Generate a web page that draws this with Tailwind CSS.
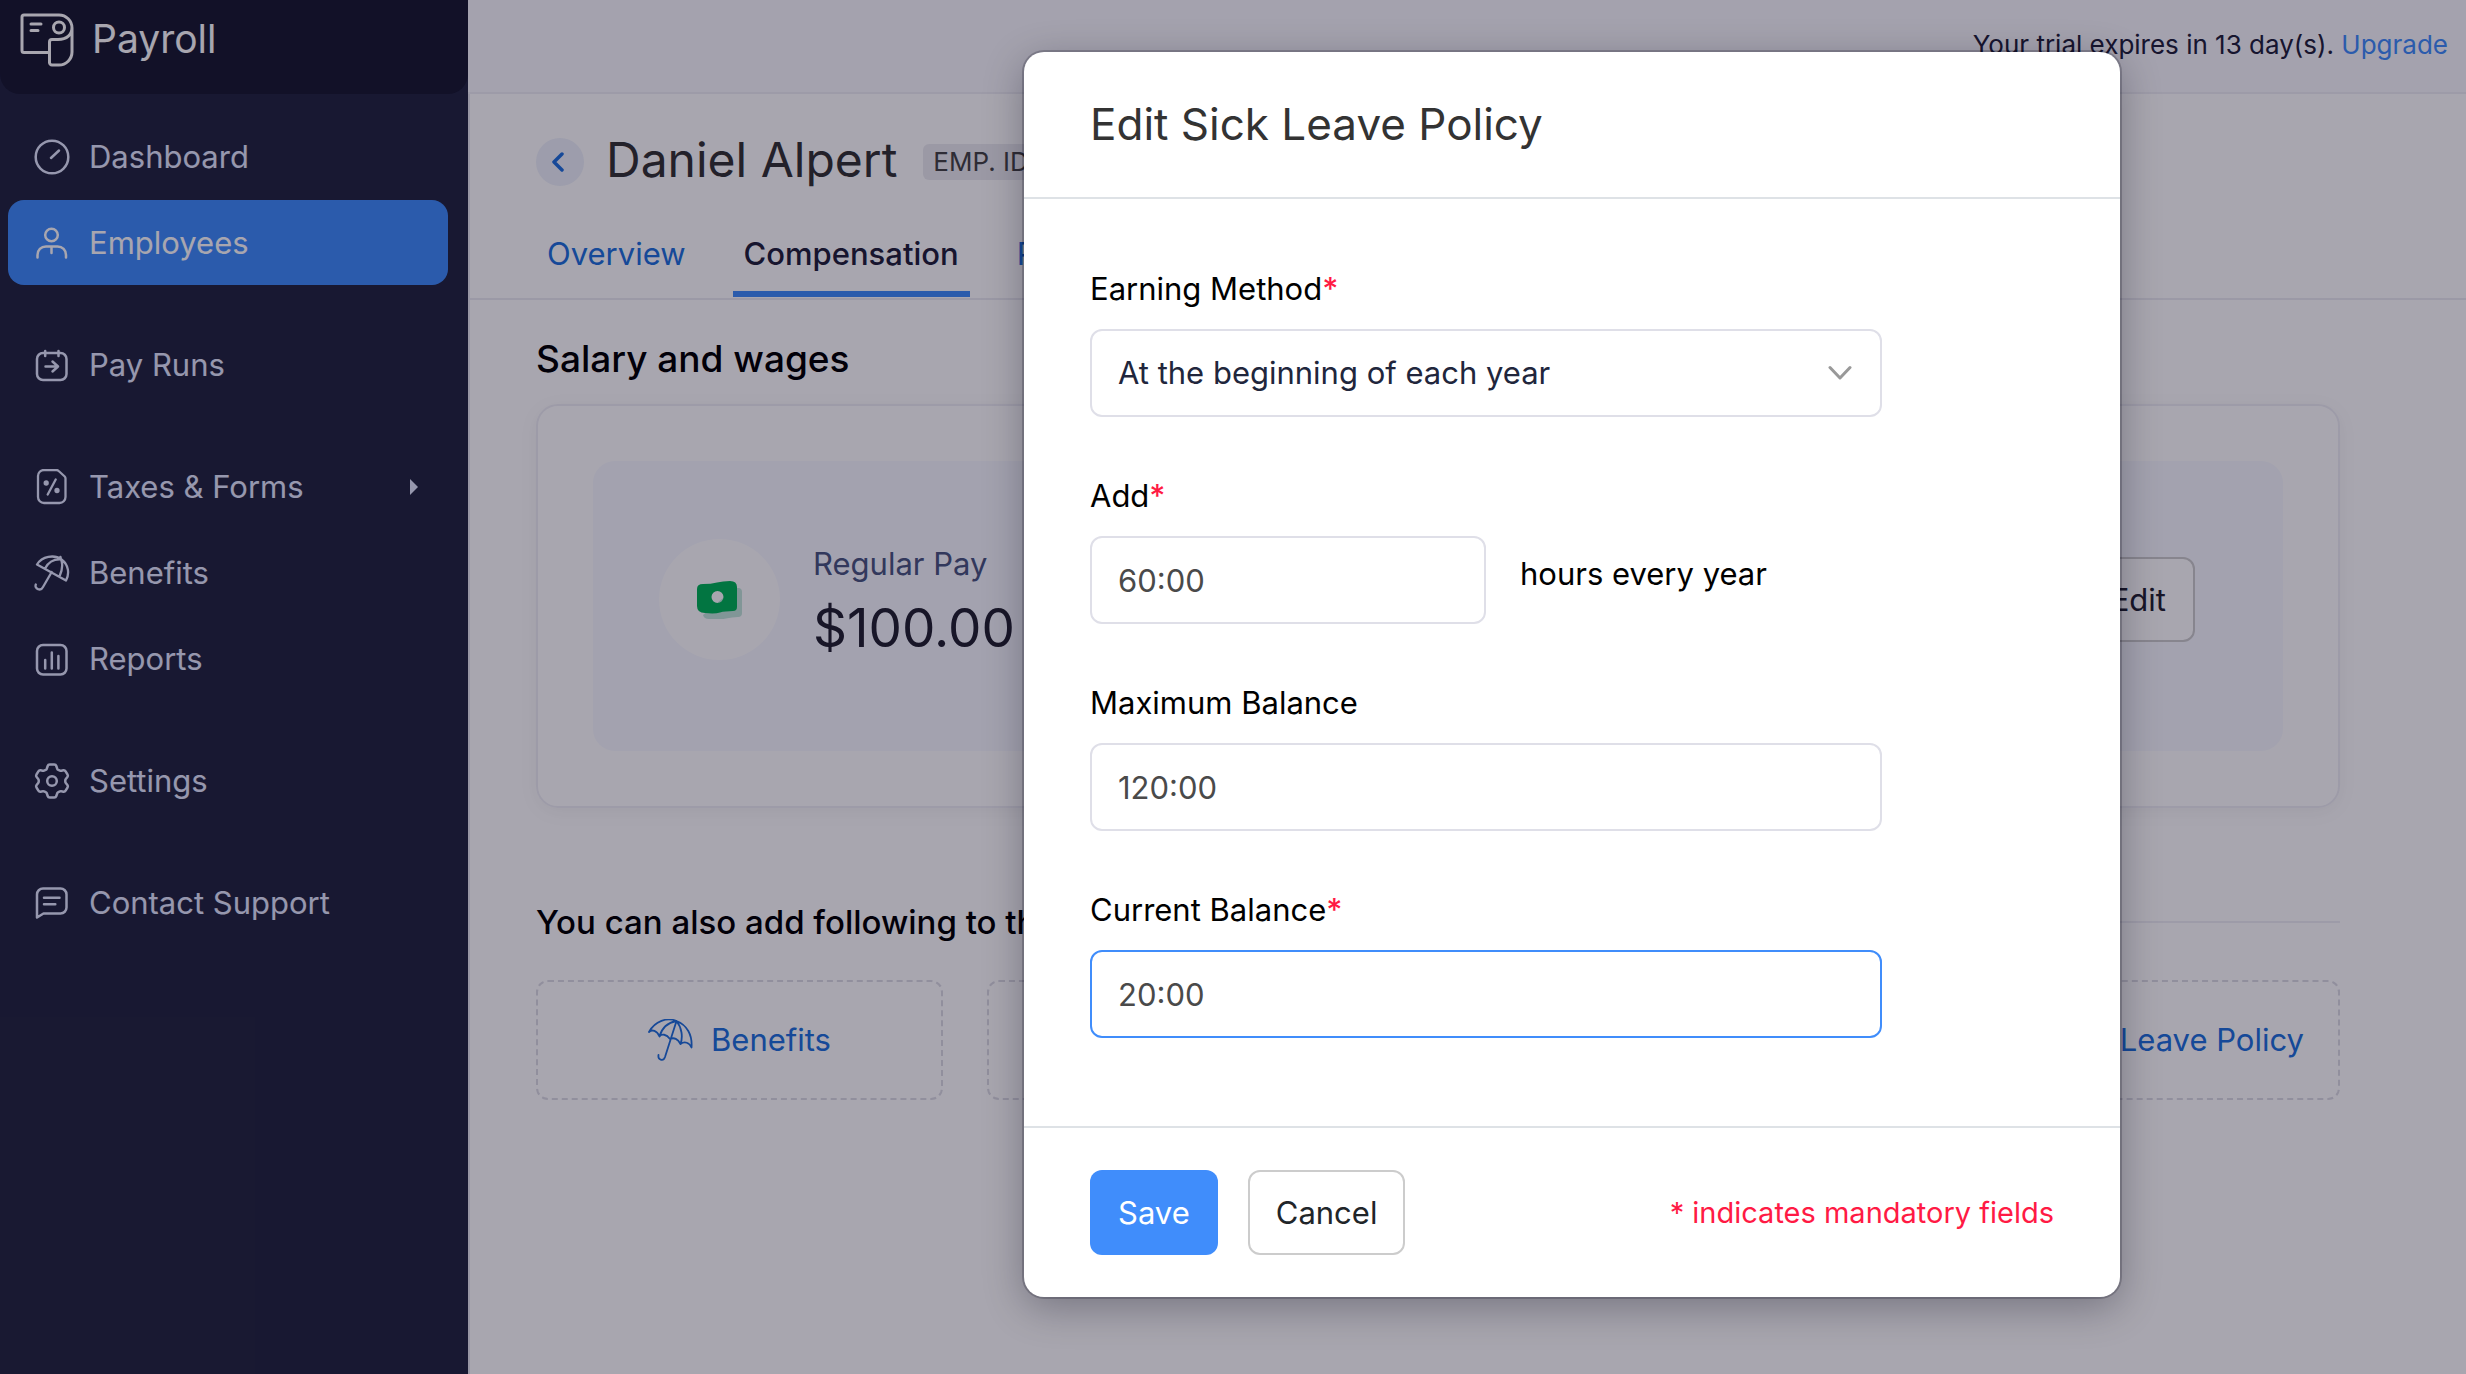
<!DOCTYPE html>
<html lang="en">
<head>
  <meta charset="UTF-8" />
  <meta name="viewport" content="width=device-width,initial-scale=1" />
  <title>Payroll – Daniel Alpert</title>
  <script src="https://cdn.jsdelivr.net/npm/@tailwindcss/browser@4"></script>
</head>

<body class="relative min-h-screen flex bg-white font-['Inter',sans-serif] text-[31px] leading-9 text-black overflow-x-hidden">

<!-- Sidebar -->
<aside class="w-[468px] shrink-0 bg-[#232640] text-[#e3e9fd]">
  <div class="h-[94px] flex items-start gap-[18px] pl-5 pt-[13px] rounded-b-[20px] bg-[#191b31] text-white">
    <svg class="w-[54px] h-[54px]" viewBox="0 0 54 54" fill="none" stroke="currentColor" stroke-width="3" stroke-linecap="round" stroke-linejoin="round">
      <path d="M29 39.500H4a2 2 0 0 1-2-2V4a2 2 0 0 1 2-2h35a13 13 0 0 1 13 13v24a13 13 0 0 1-13 13h-7a2.500 2.500 0 0 1-2.500-2.500V29a2.500 2.500 0 0 1 2.500-2.500h6c9 0 14-5 14-12"/>
      <circle cx="39" cy="14.500" r="5.500"/>
      <path d="M11 11h10M11 17.500h7"/>
    </svg>
    <span class="pt-2 text-[39px]">Payroll</span>
  </div>

  <nav class="pt-5 pl-2 pr-5 flex flex-col gap-[37px]">
    <div class="flex flex-col gap-px">
      <a href="#" class="h-[85px] flex items-center gap-[19px] px-[26px] rounded-2xl">
        <svg class="size-9" viewBox="0 0 36 36" fill="none" stroke="currentColor" stroke-width="2.500" stroke-linecap="round"><circle cx="18" cy="18" r="16.300"/><path d="M17 19l8-7.500"/></svg>
        Dashboard
      </a>
      <a href="#" class="h-[85px] flex items-center gap-[19px] px-[26px] rounded-2xl bg-[#408dfb] text-white">
        <svg class="size-9" viewBox="0 0 36 36" fill="none" stroke="currentColor" stroke-width="2.500" stroke-linecap="round"><circle cx="17.500" cy="10" r="6.300"/><path d="M3.500 32.500v-2.500c0-5 3.500-8.500 8.500-8.500h11.500c5 0 8.500 3.500 8.500 8.500v2.500M17.500 22v6"/></svg>
        Employees
      </a>
    </div>

    <a href="#" class="h-[85px] flex items-center gap-[19px] px-[26px] rounded-2xl">
      <svg class="size-9" viewBox="0 0 36 36" fill="none" stroke="currentColor" stroke-width="2.500" stroke-linecap="round" stroke-linejoin="round"><rect x="3" y="6" width="29.500" height="27" rx="6"/><path d="M11.200 4v5M24.500 4v5M11.500 19.500H24M18.500 14.500l5.500 5-5.500 5"/></svg>
      Pay Runs
    </a>

    <div class="flex flex-col gap-px">
      <a href="#" class="h-[85px] flex items-center gap-[19px] px-[26px] rounded-2xl">
        <svg class="size-9" viewBox="0 0 36 36" fill="none" stroke="currentColor" stroke-width="2.300" stroke-linecap="round" stroke-linejoin="round"><path d="M10 1h12.500c1 0 1.500.3 2.200 1l6 5.500c.6.600.8 1 .8 2V28a6 6 0 0 1-6 6H10a6 6 0 0 1-6-6V7a6 6 0 0 1 6-6zM13.700 25.500l8-15"/><circle cx="12.200" cy="14" r="1.500" fill="currentColor"/><circle cx="23" cy="21.500" r="1.500" fill="currentColor"/></svg>
        Taxes &amp; Forms
        <svg class="ml-auto mr-1 w-2 h-4" viewBox="0 0 8 16" fill="currentColor"><path d="M0 0l8 8-8 8z"/></svg>
      </a>
      <a href="#" class="h-[85px] flex items-center gap-[19px] px-[26px] rounded-2xl">
        <svg class="size-9" viewBox="0 0 36 36" fill="none" stroke="currentColor" stroke-width="2.300" stroke-linecap="round" stroke-linejoin="round"><path d="M3 9.500C8 1.500 20-1 27.500 4.500 35 10 35.500 19 32 25.500zM11 13.500C14.500 7 20 4 27 4.500M26.500 2l.5 2.500c2 4 1 11-1.500 17M17.700 17L9 32c-1 2-3 3-5 2.200-2-.7-3-2.700-2.200-4.700"/></svg>
        Benefits
      </a>
      <a href="#" class="h-[85px] flex items-center gap-[19px] px-[26px] rounded-2xl">
        <svg class="size-9" viewBox="0 0 36 36" fill="none" stroke="currentColor" stroke-width="2.500" stroke-linecap="round"><rect x="3" y="4" width="29.500" height="29.500" rx="6"/><path d="M11.200 19v8.500M17.800 11.500v16M24.400 15v12.500"/></svg>
        Reports
      </a>
    </div>

    <a href="#" class="h-[85px] flex items-center gap-[19px] px-[26px] rounded-2xl">
      <svg class="size-9" viewBox="0 0 36 36" fill="none" stroke="currentColor" stroke-width="2.500" stroke-linejoin="round"><path d="M15.700 1.500h4.600q1.500 0 2 1.500l1 2.900q.3.700 1 1l1.700.7q.7.300 1.400.1l2-.4q1.500-.2 2.200 1l2 3.400q.7 1.200-.2 2.300l-1.600 2q-.5.600-.5 1.300v1.400q0 .700.5 1.300l1.600 2q.9 1.100.2 2.300l-2 3.400q-.7 1.200-2.200 1l-2-.4q-.7-.2-1.400.1l-1.700.7q-.7.300-1 1l-1 2.900q-.5 1.500-2 1.500h-4.600q-1.500 0-2-1.500l-1-2.900q-.3-.7-1-1l-1.700-.7q-.7-.3-1.400-.1l-2 .4q-1.500.2-2.200-1l-2-3.400q-.7-1.200.2-2.300l1.600-2q.5-.6.500-1.300v-1.400q0-.7-.5-1.300l-1.600-2q-.9-1.100-.2-2.300l2-3.400q.7-1.200 2.200-1l2 .4q.7.200 1.400-.1l1.700-.7q.7-.3 1-1l1-2.900q.5-1.500 2-1.500z"/><circle cx="18" cy="18" r="4.800"/></svg>
      Settings
    </a>

    <a href="#" class="h-[85px] flex items-center gap-[19px] px-[26px] rounded-2xl">
      <svg class="size-9" viewBox="0 0 36 36" fill="none" stroke="currentColor" stroke-width="2.500" stroke-linecap="round" stroke-linejoin="round"><path d="M3 32.500V9.500a6 6 0 0 1 6-6h17.500a6 6 0 0 1 6 6v13a6 6 0 0 1-6 6H9.500zM10 12.700h15.500M10 19.200h11.300"/></svg>
      Contact Support
    </a>
  </nav>
</aside>

<!-- Page -->
<div class="flex-1 min-w-0 flex flex-col">
  <header class="h-[94px] flex justify-end pt-[27px] pr-[18px] bg-[#f9f9fe] border-b-2 border-[#efeff4] text-[26px] text-[#21213a]">
    <p>Your trial expires in 13 day(s). <a href="#" class="text-[#408dfb]">Upgrade</a></p>
  </header>

  <main class="flex-1 border-l-2 border-[#e6e6ee]">
    <div class="pt-11 pl-[66px] flex items-center">
      <button type="button" aria-label="Back" class="size-12 rounded-full bg-[#eef2fa] flex items-center justify-center text-[#1f6fdc]">
        <svg class="mr-1 w-3 h-5" viewBox="0 0 12 20" fill="none" stroke="currentColor" stroke-width="3.500" stroke-linecap="round" stroke-linejoin="round"><path d="M10 2L2 10l8 8"/></svg>
      </button>
      <h1 class="ml-[22px] pb-1 text-[48px] leading-[44px] text-[#333]">Daniel Alpert</h1>
      <span class="ml-[26px] px-[10px] w-48 rounded-md bg-[#ececf0] text-[26px] text-[#444]">EMP. ID</span>
    </div>

    <div class="mt-[31px] pl-[66px] pb-px flex gap-9 border-b-2 border-[#ececf2] text-[#2070dc]">
      <a href="#" class="px-[11px] pt-[19px] pb-[19px] border-b-6 border-transparent">Overview</a>
      <a href="#" class="px-[11px] pt-[19px] pb-[19px] border-b-6 border-[#408dfb] font-medium text-[#21213a]">Compensation</a>
      <a href="#" class="px-[11px] pt-[19px] pb-[19px] border-b-6 border-transparent">P</a>
    </div>

    <div class="pl-[66px] pr-[126px] pb-10">
      <h2 class="pt-[37px] text-[37px] leading-[44px] font-medium">Salary and wages</h2>

      <section class="mt-[23px] p-[55px] rounded-[22px] border-2 border-[#efeff4] shadow-[0_4px_20px_rgba(0,0,20,0.05)]">
        <div class="pt-[78px] pb-[91px] pl-[66px] pr-[88px] rounded-[22px] bg-[#f7f9ff] flex items-center">
          <div class="size-[121px] rounded-full bg-white flex items-center justify-center">
            <svg class="w-[46px] h-[38px]" viewBox="0 0 46 38">
              <path fill="#c3e6da" d="M38 7h4q3 .5 3 4v21q0 4-4 4-6 0-12 1.500T12 38q-5 0-6-4z"/>
              <path fill="#00b456" fill-rule="evenodd" d="M6 3q8 0 14-1.500T33 0q7 0 7 6v20q0 4-4 4-8 0-13 1.500T8 32q-8 0-8-7V8q0-5 6-5zM20.500 10a6 6 0 1 0 0 12 6 6 0 0 0 0-12z"/>
            </svg>
          </div>
          <div class="ml-[33px] pt-[7px] flex flex-col gap-[14px]">
            <p class="text-[#4a5680]">Regular Pay</p>
            <p class="text-[53px] leading-[64px] text-[#232331]">$100.00</p>
          </div>
          <button type="button" class="ml-auto h-[85px] px-[27px] rounded-xl border-2 border-[#ccc] bg-white text-[#232331]">Edit</button>
        </div>
      </section>

      <div class="mt-[94px] flex items-center">
        <h2 class="text-[33px] leading-10 font-medium whitespace-nowrap">You can also add following to the</h2>
        <div class="ml-6 flex-1 border-t-2 border-[#efeff4]"></div>
      </div>

      <div class="mt-[38px] grid grid-cols-[407fr_407fr_407fr_451fr] gap-11 text-[#2070dc]">
        <button type="button" class="h-[120px] flex items-center justify-center gap-[18px] rounded-xl border-2 border-dashed border-[#dcdce4]">
          <svg class="w-[45px] h-[42px]" viewBox="0 0 45 42" fill="none" stroke="currentColor" stroke-width="1.800" stroke-linecap="round" stroke-linejoin="round"><path d="M1 13C7 2 19-2 28.500 2 39 6 44.500 16 43.500 28.500M1 13c3-3 8-1.500 10.500 4.500 2-3 7-2.500 10.500 2.500 4-2 8 0 10.500 5 4-3 9-1.500 11 3.500M11.500 17.500C14 8.500 20 3.500 28.500 2 34 9 35 18 32.500 25M28.500 2L17 38c-.8 2.300-2.500 3.300-4.300 2.700-1.700-.6-2.600-2.300-2.200-4.700"/></svg>
          Benefits
        </button>
        <div class="h-[120px] rounded-xl border-2 border-dashed border-[#dcdce4]"></div>
        <div class="h-[120px] rounded-xl border-2 border-dashed border-[#dcdce4]"></div>
        <button type="button" class="h-[120px] pr-[34px] text-right rounded-xl border-2 border-dashed border-[#dcdce4]">Leave Policy</button>
      </div>
    </div>
  </main>
</div>

<!-- Modal -->
<div class="absolute inset-0 flex items-start justify-end pt-[52px] pr-[346px] bg-[#050019]/35">
  <form class="w-[1096px] rounded-[20px] bg-white shadow-[0_0_0_2px_rgba(0,0,20,0.2),0_10px_40px_rgba(0,0,20,0.3)]">
    <h2 class="h-[147px] pl-[66px] pt-[46px] border-b-2 border-[#dee2e6] text-[44px] leading-[52px] text-[#333]">Edit Sick Leave Policy</h2>

    <div class="pt-[72px] pb-[88px] pl-[66px] pr-[238px] flex flex-col gap-[61px]">
      <div class="flex flex-col gap-[22px]">
        <label for="method">Earning Method<span class="font-medium text-[#ff1a44]">*</span></label>
        <div class="relative">
          <select id="method" class="block w-full h-[88px] px-[26px] appearance-none rounded-xl border-2 border-[#dfdfe8] bg-white text-[#21263c] outline-none">
            <option>At the beginning of each year</option>
          </select>
          <svg class="absolute right-[30px] top-9 w-6 h-4 pointer-events-none" viewBox="0 0 24 16" fill="none" stroke="#999" stroke-width="3" stroke-linecap="round" stroke-linejoin="round"><path d="M2 2.500l10 10.500L22 2.500"/></svg>
        </div>
      </div>

      <div class="flex flex-col gap-[22px]">
        <label for="add">Add<span class="font-medium text-[#ff1a44]">*</span></label>
        <div class="flex gap-[34px]">
          <input id="add" type="text" value="60:00" class="w-1/2 h-[88px] px-[26px] rounded-xl border-2 border-[#dfdfe8] text-[#4a4a4a] outline-none" />
          <span class="pt-5">hours every year</span>
        </div>
      </div>

      <div class="flex flex-col gap-[22px]">
        <label for="max">Maximum Balance</label>
        <input id="max" type="text" value="120:00" class="w-full h-[88px] px-[26px] rounded-xl border-2 border-[#dfdfe8] text-[#4a4a4a] outline-none" />
      </div>

      <div class="flex flex-col gap-[22px]">
        <label for="current">Current Balance<span class="font-medium text-[#ff1a44]">*</span></label>
        <input id="current" type="text" value="20:00" class="w-full h-[88px] px-[26px] rounded-xl border-2 border-[#408dfb] text-[#4a4a4a] outline-none" />
      </div>
    </div>

    <div class="px-[66px] py-[42px] flex items-center border-t-2 border-[#dee2e6]">
      <button type="submit" class="h-[85px] px-7 rounded-xl bg-[#408dfb] text-white">Save</button>
      <button type="button" class="ml-[30px] h-[85px] px-[26px] rounded-xl border-2 border-[#ccc] bg-white text-[#212529]">Cancel</button>
      <p class="ml-auto text-[29px] text-[#ff1a44]">* indicates mandatory fields</p>
    </div>
  </form>
</div>

</body>
</html>
